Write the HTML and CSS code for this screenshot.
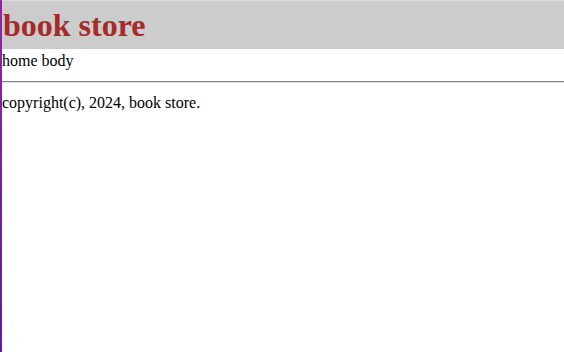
FILE: index.html
```html
<!DOCTYPE html>
<html lang="en">
<head>
  <meta charset="UTF-8">
  <meta name="viewport" content="width=device-width, initial-scale=1.0">
  <title>book store</title>
  <link rel="stylesheet" href="styles.css">
</head>
<body>
  <div class="header">
    <h1>book store</h1>
  </div>

  <div class="content">home body</div>

  <hr class="divider">

  <div class="footer">copyright(c), 2024, book store.</div>
</body>
</html>
```

FILE: styles.css
```css
html {
  height: 100%;
}

body {
  font-family: "Liberation Serif", "Times New Roman", serif;
  font-size: 16px;
  color: #000;
  margin: 0;
  padding: 0;
  min-height: 100%;
  border-left: 2px solid #7a2499;
  border-image: linear-gradient(#8a2a9c, #5c1ea0) 1;
  box-sizing: border-box;
  background-color: #fff;
}

/* 標題 */
.header {
  background-color: #cccccc;
  border-top: 1px solid #dddddd;
  padding: 6px 0 5px 1px;
}

.header h1 {
  margin: 0;
  font-size: 32px;
  font-weight: bold;
  color: #a52a2a;
}

.content {
  padding: 3px 0 0 0;
}

.divider {
  margin: 11px 0 0 0;
  border: none;
  border-top: 1px solid #888;
  border-bottom: 1px solid #ddd;
}

.footer {
  margin-top: 11px;
}
```
